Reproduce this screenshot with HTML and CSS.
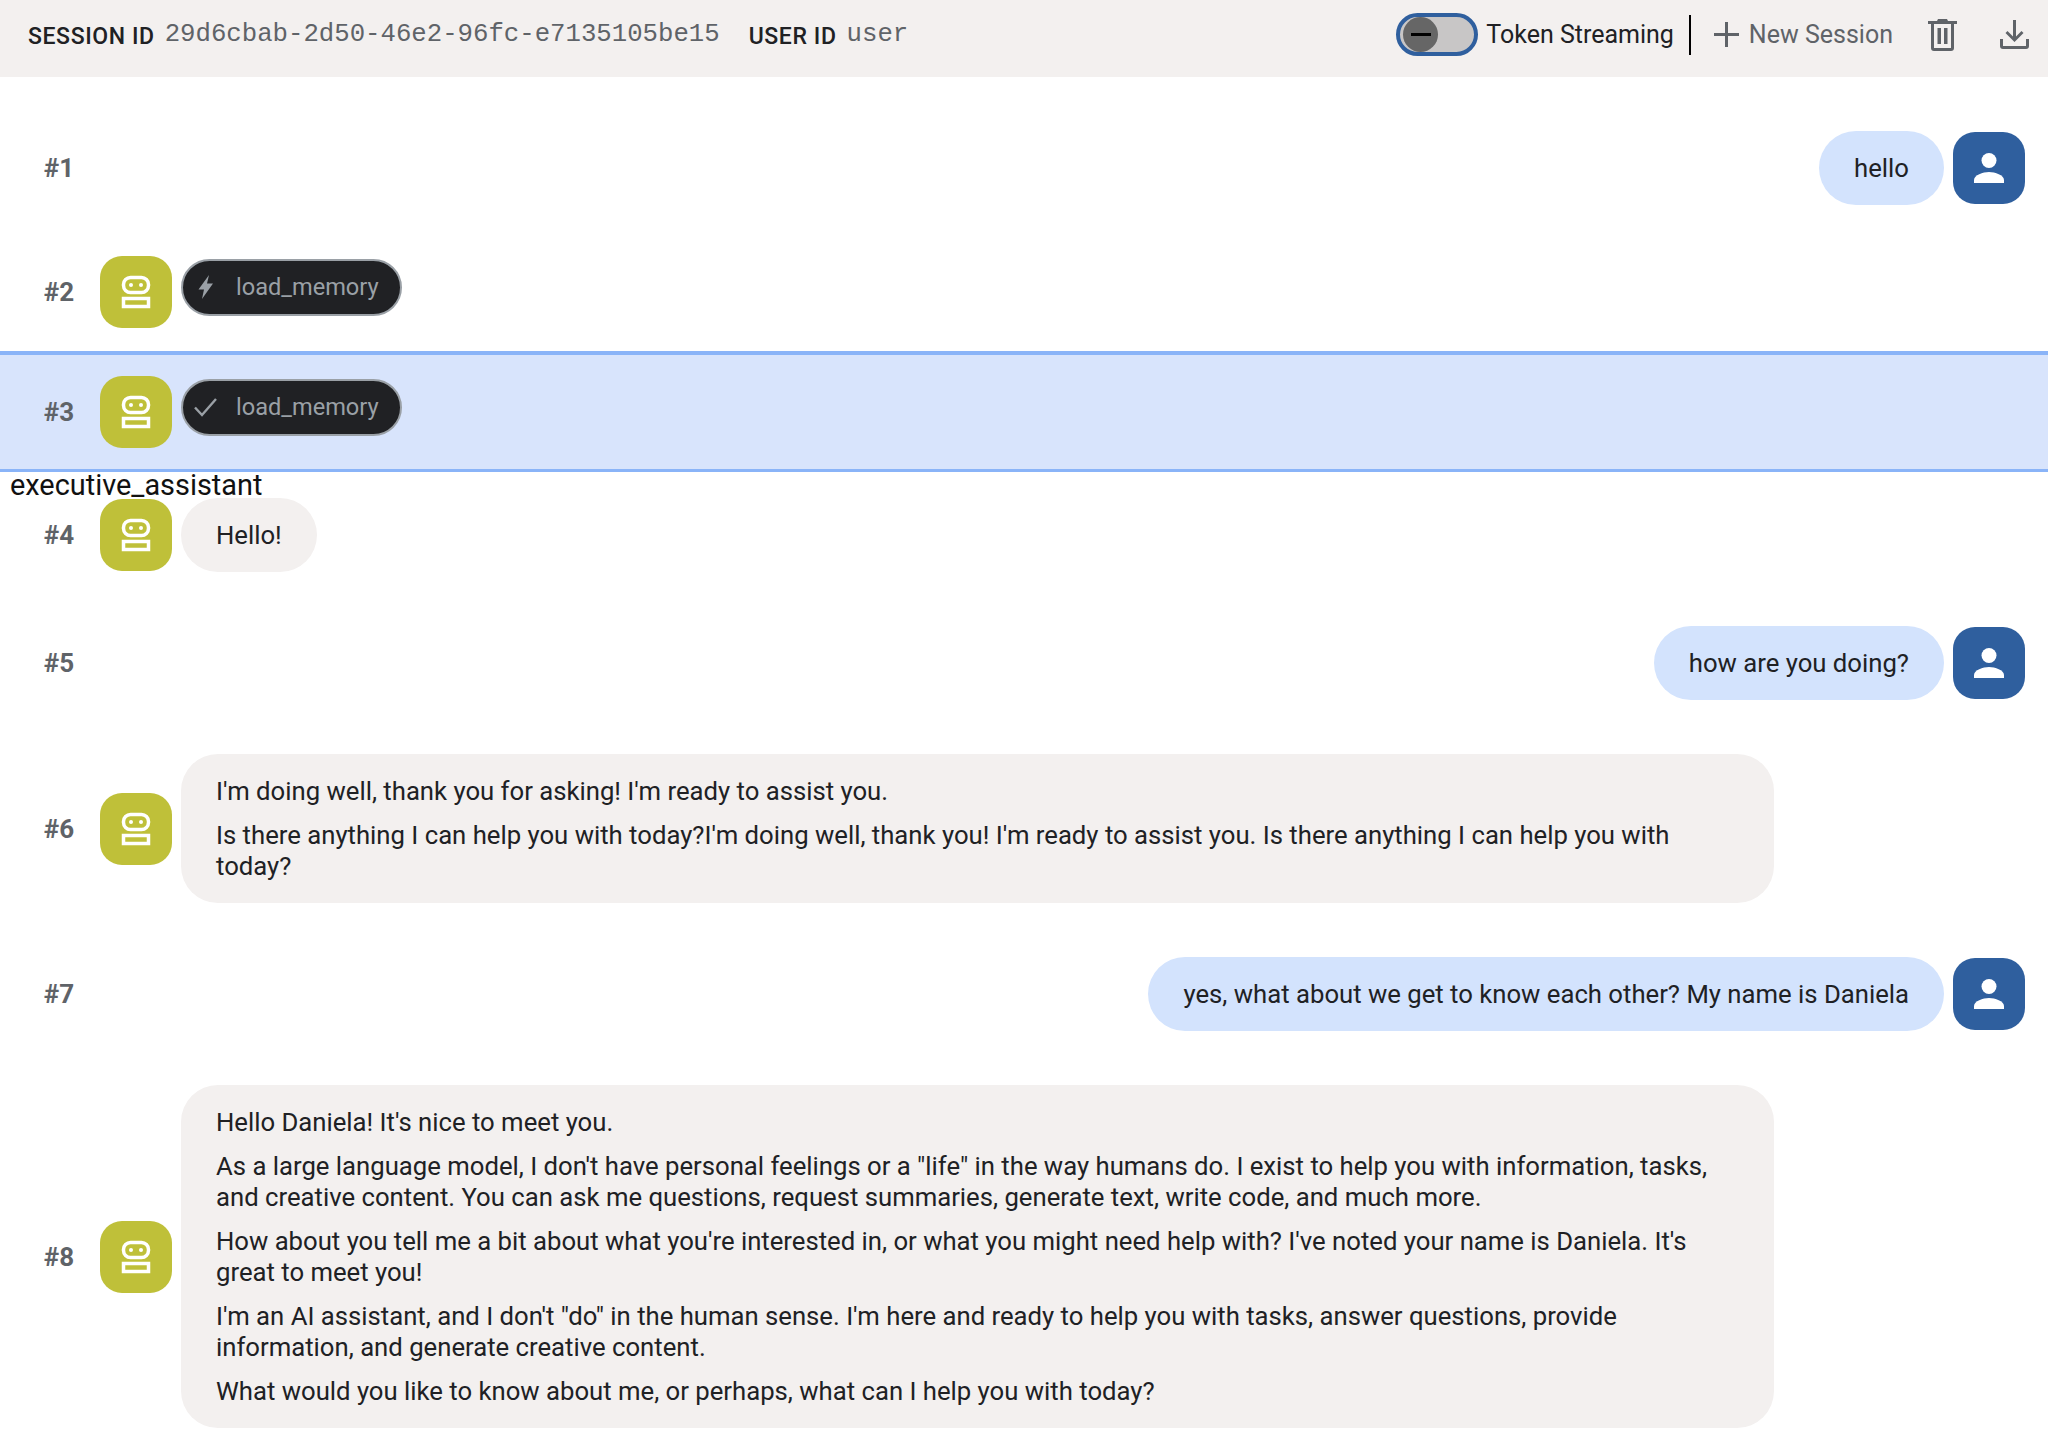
FILE: index.html
```html
<!DOCTYPE html>
<html>
<head>
    <title>Agent Chat</title>
    <link rel="stylesheet" href="styles.css">
</head>
<body>
    <svg class="defs" width="0" height="0">
        <symbol id="robot" viewBox="0 0 72 72">
            <rect x="23.5" y="21.500" width="25" height="15" rx="7" fill="none" stroke="#fff" stroke-width="3.500"/>
            <circle cx="31" cy="29" r="2" fill="#fff"/>
            <circle cx="41" cy="29" r="2" fill="#fff"/>
            <rect x="23.5" y="42.500" width="25" height="8" fill="none" stroke="#fff" stroke-width="3.500"/>
        </symbol>
        <symbol id="person" viewBox="0 0 72 72">
            <ellipse cx="36" cy="28.500" rx="7.500" ry="7.500" fill="#fff"/>
            <path d="M21 51v-3c0-5 9-8 15-8s15 3 15 8v3z" fill="#fff"/>
        </symbol>
    </svg>

    <div class="topbar">
        <div class="ids">
            <span class="id-label">SESSION ID</span>
            <span class="id-value">29d6cbab-2d50-46e2-96fc-e7135105be15</span>
            <span class="id-label user-label">USER ID</span>
            <span class="id-value">user</span>
        </div>
        <div class="actions">
            <div class="toggle"><div class="thumb"><div class="minus"></div></div></div>
            <span class="toggle-text">Token Streaming</span>
            <div class="divider"></div>
            <svg class="plus" viewBox="0 0 25 25"><path d="M11 0h3v11h11v3H14v11h-3V14H0v-3h11z" fill="#5f6368"/></svg>
            <span class="new-session">New Session</span>
            <svg class="trash" viewBox="0 0 29 32">
                <path d="M10 0h9l1 2h9v3H0V2h9z" fill="#5f6368"/>
                <path d="M3 5h23v24a3 3 0 0 1-3 3H6a3 3 0 0 1-3-3zM6 5v24h17V5z" fill="#5f6368" fill-rule="evenodd"/>
                <path d="M9.500 9h3.500v16h-3.500zM16 9h3.500v16H16z" fill="#5f6368"/>
            </svg>
            <svg class="download" viewBox="0 0 29 29">
                <path d="M13 0h3v16.500l5.500-5.500 2 2-9 9-9-9 2-2 5.500 5.500z" fill="#5f6368"/>
                <path d="M0 19h3v7h23v-7h3v7a3 3 0 0 1-3 3H3a3 3 0 0 1-3-3z" fill="#5f6368"/>
            </svg>
        </div>
    </div>

    <div class="chat">
        <div class="row first">
            <span class="num">#1</span>
            <div class="bubble user push">hello</div>
            <svg class="avatar user-avatar"><use href="#person"/></svg>
        </div>

        <div class="row event">
            <span class="num">#2</span>
            <svg class="avatar bot"><use href="#robot"/></svg>
            <div class="pill">
                <svg class="pill-icon" viewBox="0 0 23 24"><path d="M15 0 4.500 14.500H10L8 24l11-15.500h-6z" fill="#9aa0a6"/></svg>
                <span>load_memory</span>
            </div>
        </div>

        <div class="row event selected">
            <span class="num">#3</span>
            <svg class="avatar bot"><use href="#robot"/></svg>
            <div class="pill">
                <svg class="pill-icon" viewBox="0 0 23 24"><path d="M1 12.500 8 20 22 4" fill="none" stroke="#9aa0a6" stroke-width="2.400"/></svg>
                <span>load_memory</span>
            </div>
        </div>

        <div class="agent-name">executive_assistant</div>
        <div class="row named">
            <span class="num">#4</span>
            <svg class="avatar bot"><use href="#robot"/></svg>
            <div class="bubble">Hello!</div>
        </div>

        <div class="row">
            <span class="num">#5</span>
            <div class="bubble user push">how are you doing?</div>
            <svg class="avatar user-avatar"><use href="#person"/></svg>
        </div>

        <div class="row">
            <span class="num">#6</span>
            <svg class="avatar bot"><use href="#robot"/></svg>
            <div class="bubble">
                <p>I'm doing well, thank you for asking! I'm ready to assist you.</p>
                <p>Is there anything I can help you with today?I'm doing well, thank you! I'm ready to assist you. Is there anything I can help you with today?</p>
            </div>
        </div>

        <div class="row">
            <span class="num">#7</span>
            <div class="bubble user push">yes, what about we get to know each other? My name is Daniela</div>
            <svg class="avatar user-avatar"><use href="#person"/></svg>
        </div>

        <div class="row">
            <span class="num">#8</span>
            <svg class="avatar bot"><use href="#robot"/></svg>
            <div class="bubble">
                <p>Hello Daniela! It's nice to meet you.</p>
                <p>As a large language model, I don't have personal feelings or a "life" in the way humans do. I exist to help you with information, tasks, and creative content. You can ask me questions, request summaries, generate text, write code, and much more.</p>
                <p>How about you tell me a bit about what you're interested in, or what you might need help with? I've noted your name is Daniela. It's great to meet you!</p>
                <p>I'm an AI assistant, and I don't "do" in the human sense. I'm here and ready to help you with tasks, answer questions, provide information, and generate creative content.</p>
                <p>What would you like to know about me, or perhaps, what can I help you with today?</p>
            </div>
        </div>
    </div>
</body>
</html>
```

FILE: styles.css
```css
html, body {
    height: 100%;
}

body {
    margin: 0;
    background-color: #fff;
    color: #1f1f1f;
    font-family: Roboto, "Liberation Sans", sans-serif;
    overflow: hidden;
}

.defs {
    position: absolute;
}

/* top bar */
.topbar {
    height: 77px;
    box-sizing: border-box;
    background-color: #f3f0ef;
    display: flex;
    align-items: center;
    justify-content: space-between;
    padding: 0 19px 8px 28px;
}

.ids {
    display: flex;
    align-items: baseline;
}

.id-label {
    font-size: 23px;
    font-weight: 500;
    letter-spacing: 0.6px;
    color: #202124;
    margin-right: 10px;
    position: relative;
    top: 3px;
}

.user-label {
    margin-left: 29px;
}

.id-value {
    font-family: "Liberation Mono", monospace;
    font-size: 25.7px;
    color: #5f6368;
}

.actions {
    display: flex;
    align-items: center;
}

.toggle {
    width: 82px;
    height: 43px;
    box-sizing: border-box;
    border: 4px solid #2f5f9e;
    border-radius: 22px;
    background-color: #c8c6c6;
    display: flex;
    align-items: center;
    padding-left: 3px;
}

.thumb {
    width: 35px;
    height: 35px;
    border-radius: 50%;
    background-color: #666;
    display: flex;
    align-items: center;
    justify-content: center;
}

.minus {
    width: 20px;
    height: 3px;
    background-color: #000;
}

.toggle-text {
    font-size: 25px;
    margin-left: 8px;
    color: #202124;
}

.divider {
    width: 2px;
    height: 40px;
    background-color: #000;
    margin: 0 23px 0 15px;
}

.plus {
    width: 25px;
    height: 25px;
}

.new-session {
    font-size: 25px;
    color: #5f6368;
    margin-left: 10px;
}

.trash {
    width: 29px;
    height: 32px;
    margin-left: 35px;
}

.download {
    width: 29px;
    height: 29px;
    margin-left: 43px;
}

/* chat rows */
.row {
    display: flex;
    align-items: center;
    padding: 27px 23px 27px 0;
}

.row.first {
    padding-top: 54px;
    padding-bottom: 27px;
}

.row.event {
    padding-top: 24px;
    padding-bottom: 23px;
}

.row.selected {
    background-color: #d8e4fc;
    border-top: 4px solid #8ab4f8;
    border-bottom: 3px solid #8ab4f8;
    padding-top: 21px;
    padding-bottom: 21px;
}

.row.named {
    padding-top: 0;
}

.agent-name {
    font-size: 28.9px;
    line-height: 26px;
    height: 26px;
    padding-left: 10px;
    color: #111;
    white-space: nowrap;
}

.num {
    flex: none;
    width: 56px;
    margin: 0 13px 0 31px;
    text-align: center;
    font-size: 26px;
    font-weight: 700;
    color: #5f6368;
}

.avatar {
    flex: none;
    width: 72px;
    height: 72px;
    border-radius: 22px;
}

.bot {
    background-color: #bfc039;
    margin-right: 9px;
}

.user-avatar {
    background-color: #2f5f9e;
    margin-left: 9px;
}

.bubble {
    max-width: 1523px;
    padding: 21.5px 35px;
    border-radius: 37px;
    background-color: #f3f0ef;
    font-size: 25.7px;
    line-height: 31px;
    color: #202124;
}

.bubble p {
    margin: 0 0 13px 0;
}

.bubble p:last-child {
    margin-bottom: 0;
}

.bubble.user {
    background-color: #d3e3fd;
}

.push {
    margin-left: auto;
}

.pill {
    display: flex;
    align-items: center;
    width: 221px;
    height: 57px;
    box-sizing: border-box;
    border: 2px solid #9aa0a6;
    border-radius: 29px;
    background-color: #202124;
    color: #9aa0a6;
    font-size: 23.6px;
    padding-left: 11px;
    margin-top: -10px;
}

.pill-icon {
    width: 23px;
    height: 24px;
    flex: none;
    margin-right: 19px;
}
```
